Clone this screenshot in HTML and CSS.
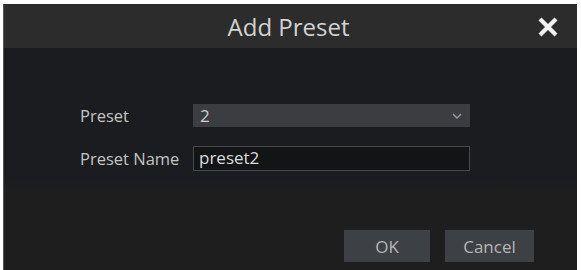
FILE: index.html
```html
<!DOCTYPE html>
<html>
<head>
<meta charset="utf-8">
<link rel="stylesheet" href="styles.css">
</head>
<body>
<div class="dialog">
  <div class="header">
    <span class="title">Add Preset</span>
    <svg class="close" width="22" height="22" viewBox="0 0 22 22"><path d="M3 3 L19 19 M19 3 L3 19" stroke="#f2f2f2" stroke-width="4.2" stroke-linecap="butt"/></svg>
  </div>
  <div class="body">
    <div class="form">
      <div class="row">
        <span class="label">Preset</span>
        <div class="select"><span>2</span>
          <svg width="10" height="6" viewBox="0 0 10 6"><path d="M1 1 L5 5 L9 1" stroke="#9a9da2" stroke-width="1.4" fill="none"/></svg>
        </div>
      </div>
      <div class="row">
        <span class="label">Preset Name</span>
        <div class="input">preset2</div>
      </div>
    </div>
    <div class="footer">
      <div class="btn ok">OK</div>
      <div class="btn cancel">Cancel</div>
    </div>
  </div>
</div>
</body>
</html>
```
FILE: styles.css
```css
html, body {
  margin: 0;
  padding: 0;
  background: #ffffff;
  width: 581px;
  height: 270px;
  overflow: hidden;
}
body {
  font-family: "Open Sans", "Noto Sans", sans-serif;
}
.dialog {
  margin: 4px 4px 0 3px;
  height: 266px;
  display: flex;
  flex-direction: column;
  background: #1c1d20;
  border-left: 1px solid #555;
}
.header {
  height: 44px;
  background: #2c2c2c;
  display: flex;
  align-items: center;
  justify-content: center;
  position: relative;
}
.title {
  color: #d2d2d2;
  font-size: 24px;
  margin-right: 4px;
}
.close {
  position: absolute;
  right: 18px;
  top: 12px;
}
.body {
  flex: 1;
  display: flex;
  flex-direction: column;
  background: linear-gradient(#1a1c1f 0, #1a1c1f 132px, #1e1e1f 142px);
}
.form {
  padding: 56px 0 0 76px;
  display: flex;
  flex-direction: column;
  gap: 19px;
}
.row {
  display: flex;
  align-items: center;
}
.label {
  width: 113px;
  color: #c4c4c4;
  font-size: 16.5px;
}
.select {
  width: 277px;
  height: 23px;
  background: #3b3d41;
  display: flex;
  align-items: center;
  justify-content: space-between;
  padding: 0 8px 0 7px;
  box-sizing: border-box;
  color: #d0d0d0;
  font-size: 17px;
}
.input {
  width: 277px;
  height: 25px;
  background: #131416;
  border: 1px solid #45484c;
  box-sizing: border-box;
  padding-left: 5px;
  color: #dcdcdc;
  font-size: 17px;
  line-height: 22px;
}
.footer {
  margin-top: auto;
  display: flex;
  justify-content: flex-end;
  gap: 15px;
  padding: 0 43px 8px 0;
}
.btn {
  height: 32px;
  background: #3d4044;
  color: #b6b6b6;
  font-size: 17px;
  display: flex;
  align-items: center;
  justify-content: center;
}
.ok { width: 86px; }
.cancel { width: 89px; }
```
